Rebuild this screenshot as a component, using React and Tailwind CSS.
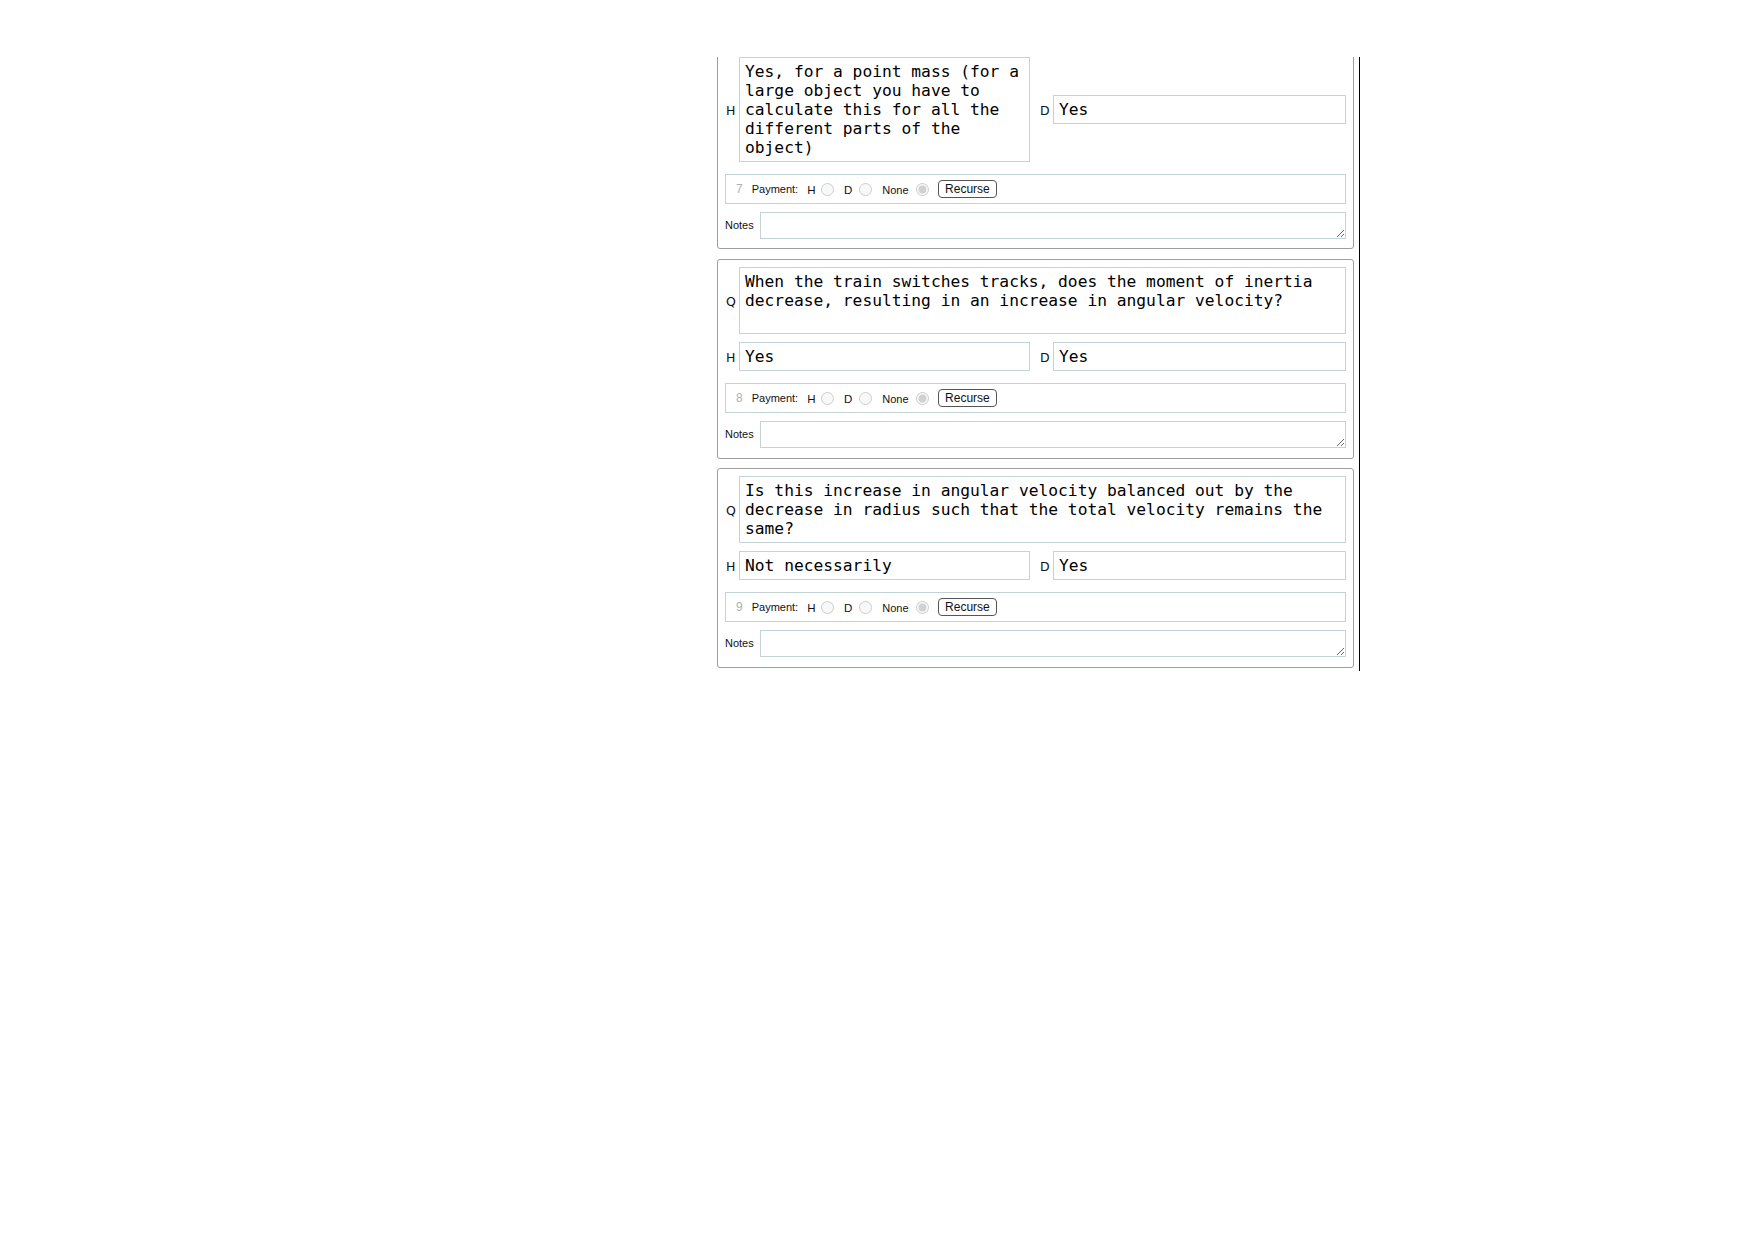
import React from "react";

const mono = "font-['DejaVu_Sans_Mono',monospace] text-[16.25px] leading-[19px] text-black";
const boxBorder = "border border-[#c4d4d4]";

function Label({ children, className = "" }) {
  return (
    <div className={"w-[14px] shrink-0 pl-[1px] pt-[3px] font-['DejaVu_Sans',sans-serif] text-[12.5px] text-[#111] " + className}>
      {children}
    </div>
  );
}

function Box({ children, className = "" }) {
  return (
    <div className={boxBorder + " " + mono + " px-[5px] py-[4px] whitespace-pre-wrap " + className}>
      {children}
    </div>
  );
}

function Radio({ checked, className = "" }) {
  return (
    <input
      type="radio"
      disabled
      defaultChecked={checked}
      className={"m-0 w-[13px] h-[13px] shrink-0 " + className}
    />
  );
}

function PaymentRow({ num }) {
  const sans = "font-['Liberation_Sans',Arial,sans-serif]";
  return (
    <div className={boxBorder + " h-[30px] flex items-center " + sans}>
      <span className="ml-[10px] text-[12px] text-[#b0b0b0]">{num}</span>
      <span className="ml-[9px] text-[11px] text-[#111]">Payment:</span>
      <span className="ml-[9px] text-[11.5px] text-[#111] mt-[3px]">H</span>
      <Radio className="ml-[6px]" />
      <span className="ml-[9.5px] text-[11.5px] text-[#111] mt-[3px]">D</span>
      <Radio className="ml-[6.5px]" />
      <span className="ml-[10.5px] text-[11px] text-[#111] mt-[3px]">None</span>
      <Radio checked className="ml-[7px]" />
      <button className="ml-[9.5px] h-[18px] px-[6px] border border-[#555] rounded-[4px] text-[12px] leading-[16px] text-[#111] bg-white">
        Recurse
      </button>
    </div>
  );
}

function NotesRow() {
  return (
    <div className="flex items-center">
      <span className="w-[35px] shrink-0 font-['Liberation_Sans',Arial,sans-serif] text-[11px] text-[#111]">Notes</span>
      <textarea className={boxBorder + " flex-1 h-[27px] block outline-none bg-white"} />
    </div>
  );
}

function Panel({ num, q, h, d, className = "" }) {
  return (
    <div className={"border border-[#9d9d9d] rounded-[3px] px-[7px] pt-[7px] flex flex-col shrink-0 " + className}>
      {q && (
        <div className="flex items-center mb-[8px]">
          <Label>Q</Label>
          <Box className="flex-1 h-[67px]">{q}</Box>
        </div>
      )}
      <div className="flex items-center">
        <Label>H</Label>
        <Box className="w-[291px]">{h}</Box>
        <Label className="ml-[9px]">D</Label>
        <Box className="flex-1">{d}</Box>
      </div>
      <div className="mt-[12px]">
        <PaymentRow num={num} />
      </div>
      <div className="mt-[8px]">
        <NotesRow />
      </div>
    </div>
  );
}

export default function App() {
  return (
    <div className="w-[1754px] h-[1240px] bg-white">
      <div className="ml-[717px] pt-[57px]">
        <div className="w-[643px] h-[614px] border-r border-black overflow-hidden">
          <div className="w-[637px] flex flex-col">
            <Panel
              num="7"
              className="-mt-[8px] rounded-t-none pb-[9px]"
              h={"Yes, for a point mass (for a\nlarge object you have to\ncalculate this for all the\ndifferent parts of the\nobject)"}
              d="Yes"
            />
            <Panel
              num="8"
              className="mt-[10px] pb-[10px]"
              q="When the train switches tracks, does the moment of inertia decrease, resulting in an increase in angular velocity?"
              h="Yes"
              d="Yes"
            />
            <Panel
              num="9"
              className="mt-[9px] pb-[10px]"
              q="Is this increase in angular velocity balanced out by the decrease in radius such that the total velocity remains the same?"
              h="Not necessarily"
              d="Yes"
            />
          </div>
        </div>
      </div>
    </div>
  );
}
